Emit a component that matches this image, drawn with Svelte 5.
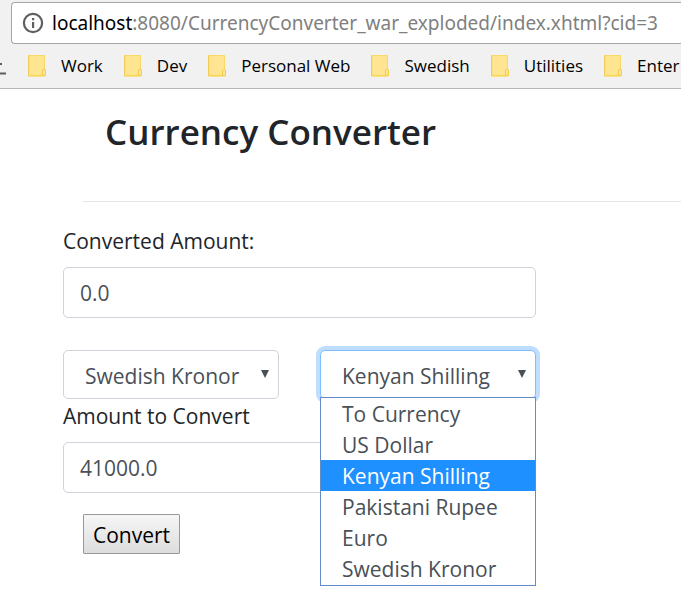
<script>
  const bookmarks = ['Work', 'Dev', 'Personal Web', 'Swedish', 'Utilities', 'Enter'];
  const currencies = ['To Currency', 'US Dollar', 'Kenyan Shilling', 'Pakistani Rupee', 'Euro', 'Swedish Kronor'];

  let converted = $state('0.0');
  let amount = $state('41000.0');
  let from = $state('Swedish Kronor');
  let to = $state('Kenyan Shilling');
  let open = $state(true);

  function choose(name) {
    to = name;
    open = false;
  }
</script>

<div class="browser">
  <div class="address">
    <svg class="info" viewBox="0 0 22 22" aria-hidden="true">
      <circle cx="11" cy="11" r="9.1" fill="none" stroke="#5f5f5f" stroke-width="2.2" />
      <path d="M10 6h2.200v2.200h-2.200zM10 10h2.200v6h-2.200z" fill="#5f5f5f" />
    </svg>
    <div class="url"><b>localhost</b>:8080/CurrencyConverter_war_exploded/index.xhtml?cid=3</div>
  </div>
  <nav class="bookmarks">
    <svg class="download" viewBox="0 0 7 22" aria-hidden="true">
      <path d="M0 9h2M0 18.5h6" stroke="#5f5f5f" stroke-width="2" />
    </svg>
    {#each bookmarks as name}
      <a href="#{name}">
        <svg viewBox="0 0 18 22" aria-hidden="true">
          <path d="M.5.5h16v14.500h1v6H.5z" fill="#ffe591" stroke="#f7d964" />
          <path d="M.6.500v20.500" stroke="#f0cc5a" stroke-width="1.200" />
          <path d="M1 20.700h13" stroke="#fbd74f" stroke-width="1.300" />
          <path d="M14.500 20.500v-5q0-1 1-1h1q1 0 1 1v4q0 1-1 1z" fill="#ffe591" stroke="#f2cb47" />
        </svg>
        <span>{name}</span>
      </a>
    {/each}
  </nav>
</div>

<main>
  <header>
    <h1>Currency Converter</h1>
  </header>

  <form onsubmit={(e) => e.preventDefault()}>
    <label for="converted">Converted Amount:</label>
    <input id="converted" type="text" bind:value={converted} />

    <div class="pair">
      <div class="picker">
        <select aria-label="From currency" bind:value={from}>
          {#each currencies as name}<option>{name}</option>{/each}
        </select>
        <svg class="arrow" viewBox="0 0 8 8" aria-hidden="true"><path d="M0 0h8L4 8z" /></svg>
      </div>
      <div class="picker">
        <select class:focused={open} aria-label="To currency" bind:value={to}>
          {#each currencies as name}<option>{name}</option>{/each}
        </select>
        <svg class="arrow" viewBox="0 0 8 8" aria-hidden="true"><path d="M0 0h8L4 8z" /></svg>
        {#if open}
          <div class="menu" role="listbox" aria-label="To currency choices">
            {#each currencies as name}
              <button type="button" role="option" aria-selected={name === to} class:chosen={name === to} onclick={() => choose(name)}>{name}</button>
            {/each}
          </div>
        {/if}
      </div>
    </div>

    <label for="amount">Amount to Convert</label>
    <input id="amount" type="text" bind:value={amount} />
    <button class="convert" type="submit">Convert</button>
  </form>
</main>

<style>
  :global(body) {
    background: #fff;
    color: #212529;
    font: 400 21px/32px "Segoe UI", "Open Sans", "Noto Sans", sans-serif;
  }

  .browser {
    overflow: hidden;
    padding-top: 2px;
    background: #f1f1f1;
    border-bottom: 1px solid #b5b5b5;
  }

  .address {
    display: flex;
    align-items: center;
    gap: 8px;
    height: 40px;
    margin-left: 11px;
    padding-left: 10px;
    background: #fff;
    border: 1px solid #a6a6a6;
    border-right: 0;
    border-radius: 4px 0 0 4px;
  }

  .info {
    flex: none;
    width: 22px;
    height: 22px;
  }

  .url {
    overflow: hidden;
    color: #808080;
    font-family: "Segoe UI", "Noto Sans", sans-serif;
    font-size: 19px;
    white-space: nowrap;
  }

  .url b {
    color: #000;
    font-weight: inherit;
  }

  .bookmarks {
    display: flex;
    align-items: center;
    gap: 21px;
    height: 44px;
    font-size: 17px;
    white-space: nowrap;
  }

  .bookmarks a {
    display: flex;
    flex: none;
    align-items: center;
    gap: 15px;
    color: #000;
    text-decoration: none;
  }

  .bookmarks a svg {
    width: 18px;
    height: 22px;
  }

  .bookmarks .download {
    flex: none;
    width: 7px;
    height: 22px;
  }

  main {
    padding: 0 0 48px 63px;
  }

  header {
    margin-left: 20px;
    padding: 19px 0 45px 22px;
    border-bottom: 1px solid #e5e5e5;
  }

  h1 {
    margin: 0;
    font-size: 35px;
    font-weight: 600;
    line-height: 48px;
  }

  form {
    display: flex;
    flex-direction: column;
    box-sizing: border-box;
    max-width: 473px;
    padding-top: 23px;
  }

  label {
    margin-bottom: 10px;
  }

  input,
  select {
    box-sizing: border-box;
    width: 100%;
    color: #495057;
    font: inherit;
    background: #fff;
    border: 1px solid #ced4da;
    border-radius: 5px;
    outline: 0;
  }

  input {
    height: 51px;
    padding: 1px 16px 0;
  }

  .pair {
    display: grid;
    grid-template-columns: 1fr 1fr;
    gap: 41px;
    margin: 32px 0 1px;
  }

  .picker {
    position: relative;
  }

  select {
    display: block;
    height: 49px;
    padding: 3px 30px 0 21px;
    appearance: none;
  }

  select.focused {
    border-color: #80bdff;
    box-shadow: 0 0 0 4px #bfdeff;
  }

  .arrow {
    position: absolute;
    top: 20px;
    right: 10px;
    width: 8px;
    height: 8px;
    fill: #495057;
    pointer-events: none;
  }

  .menu {
    position: absolute;
    top: 47px;
    right: 0;
    left: 0;
    z-index: 1;
    display: flex;
    flex-direction: column;
    padding-bottom: 1px;
    background: #fff;
    border: 1px solid #648cc8;
  }

  .menu button {
    height: 31px;
    padding: 2px 0 0 21px;
    color: #495057;
    font: inherit;
    line-height: 29px;
    text-align: left;
    white-space: nowrap;
    background: none;
    border: 0;
  }

  .menu .chosen {
    color: #fff;
    background: #1e90ff;
  }

  .convert {
    align-self: flex-start;
    height: 40px;
    margin: 21px 0 0 20px;
    padding: 2px 9px 0;
    color: #000;
    font: inherit;
    background: linear-gradient(#f6f6f6, #dddddd);
    border: 1px solid #999;
    border-radius: 1px;
  }
</style>
